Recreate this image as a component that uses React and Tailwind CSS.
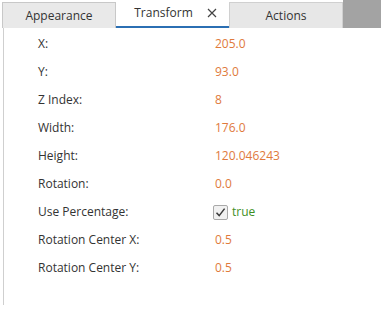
import React from 'react';

const rows = [
  ['X:', '205.0'],
  ['Y:', '93.0'],
  ['Z Index:', '8'],
  ['Width:', '176.0'],
  ['Height:', '120.046243'],
  ['Rotation:', '0.0'],
  ['Use Percentage:', null],
  ['Rotation Center X:', '0.5'],
  ['Rotation Center Y:', '0.5'],
];

export default function App() {
  return (
    <div className="w-[381px] h-[309px] bg-white flex flex-col text-[12px] text-[#333]" style={{ fontFamily: '"Open Sans", "Noto Sans", sans-serif' }}>
      {/* Tab strip */}
      <div className="h-[28px] flex items-end">
        <div className="w-[2px] h-full bg-white" />
        <div className="w-[114px] h-[26px] bg-[#e9e9e9] border border-[#c8c8c8] border-b-0 flex items-center justify-center">
          Appearance
        </div>
        <div className="w-[113px] h-[28px] bg-white border-b-2 border-[#2b6fb3] flex items-center justify-center gap-[14px] pl-[6px]">
          <span>Transform</span>
          <svg width="10" height="10" viewBox="0 0 10 10">
            <path d="M1 1 L9 9 M9 1 L1 9" stroke="#444" strokeWidth="1.2" />
          </svg>
        </div>
        <div className="w-[114px] h-[26px] bg-[#e7e7e7] border border-[#d0d0d0] border-b-0 flex items-center justify-center">
          Actions
        </div>
        <div className="flex-1 h-full bg-[#a3a3a3]" />
      </div>

      {/* Properties */}
      <div className="flex-1 ml-[3px] mb-[4px] border-l border-[#cfcfcf] pt-[2px]">
        {rows.map(([label, value]) => (
          <div key={label} className="h-[28px] flex items-center">
            <div className="w-[211px] pl-[34px]">{label}</div>
            {value === null ? (
              <div className="flex items-center gap-[4px] -ml-[2px]">
                <span className="w-[15px] h-[15px] border border-[#a9a9a9] rounded-[2px] bg-[#f1f1f1] flex items-center justify-center">
                  <svg width="11" height="11" viewBox="0 0 11 11">
                    <path d="M1.5 5.8 L4.2 8.6 L9.6 1.6" fill="none" stroke="#3a3a3a" strokeWidth="1.5" />
                  </svg>
                </span>
                <span className="text-[#3f8f1f]">true</span>
              </div>
            ) : (
              <div className="text-[#e07a3c]">{value}</div>
            )}
          </div>
        ))}
      </div>
    </div>
  );
}
